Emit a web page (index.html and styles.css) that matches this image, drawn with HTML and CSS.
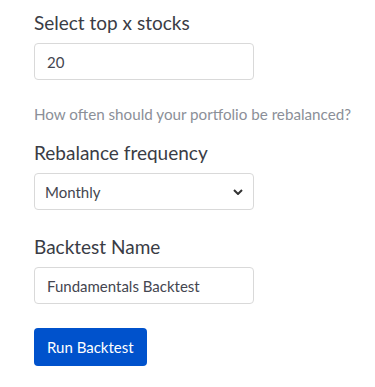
FILE: index.html
```html
<!DOCTYPE html>
<html lang="en">
<head>
  <meta charset="UTF-8" />
  <meta name="viewport" content="width=device-width, initial-scale=1.0"/>
  <title>Backtest</title>
  <link rel="stylesheet" href="styles.css">
</head>
<body>

  <form class="backtest-form">
    <div class="field">
      <label for="topX">Select top x stocks</label>
      <input type="text" id="topX" value="20" />
    </div>

    <p class="hint">How often should your portfolio be rebalanced?</p>

    <div class="field">
      <label for="freq">Rebalance frequency</label>
      <select id="freq">
        <option>Monthly</option>
        <option>Quarterly</option>
        <option>Yearly</option>
      </select>
    </div>

    <div class="field last">
      <label for="name">Backtest Name</label>
      <input type="text" id="name" value="Fundamentals Backtest" />
    </div>

    <button type="button">Run Backtest</button>
  </form>

</body>
</html>
```

FILE: styles.css
```css
* {
  margin: 0;
  padding: 0;
  box-sizing: border-box;
}

body {
  font-family: Lato, 'Open Sans', sans-serif;
  background: #fff;
  color: #31333f;
  padding: 11px 0 0 34px;
}

.backtest-form {
  width: 220px;
}

.field {
  margin-bottom: 25px;
}

.field.last {
  margin-bottom: 24px;
}

.field label {
  display: block;
  font-size: 19px;
  line-height: 24px;
  margin-bottom: 8px;
  color: #3a3c45;
}

.field input,
.field select {
  display: block;
  width: 220px;
  height: 37px;
  padding: 0 12px;
  border: 1px solid #d9d9d9;
  border-radius: 4px;
  background: #fff;
  font-family: inherit;
  font-size: 15px;
  color: #444650;
}

.field select {
  appearance: none;
  padding-left: 10px;
  background-image: url("data:image/svg+xml,%3Csvg xmlns='http://www.w3.org/2000/svg' width='10' height='6' viewBox='0 0 10 6'%3E%3Cpath d='M1 1l4 4 4-4' fill='none' stroke='%23333' stroke-width='2'/%3E%3C/svg%3E");
  background-repeat: no-repeat;
  background-position: right 10px center;
}

.hint {
  width: 340px;
  font-size: 15.2px;
  color: #8b8f98;
  margin-top: 1px;
  margin-bottom: 18px;
}

button {
  padding: 0 13px;
  height: 38px;
  font-family: inherit;
  font-size: 15px;
  color: #fff;
  background-color: #0052cc;
  border: none;
  border-radius: 4px;
  cursor: pointer;
}
```
